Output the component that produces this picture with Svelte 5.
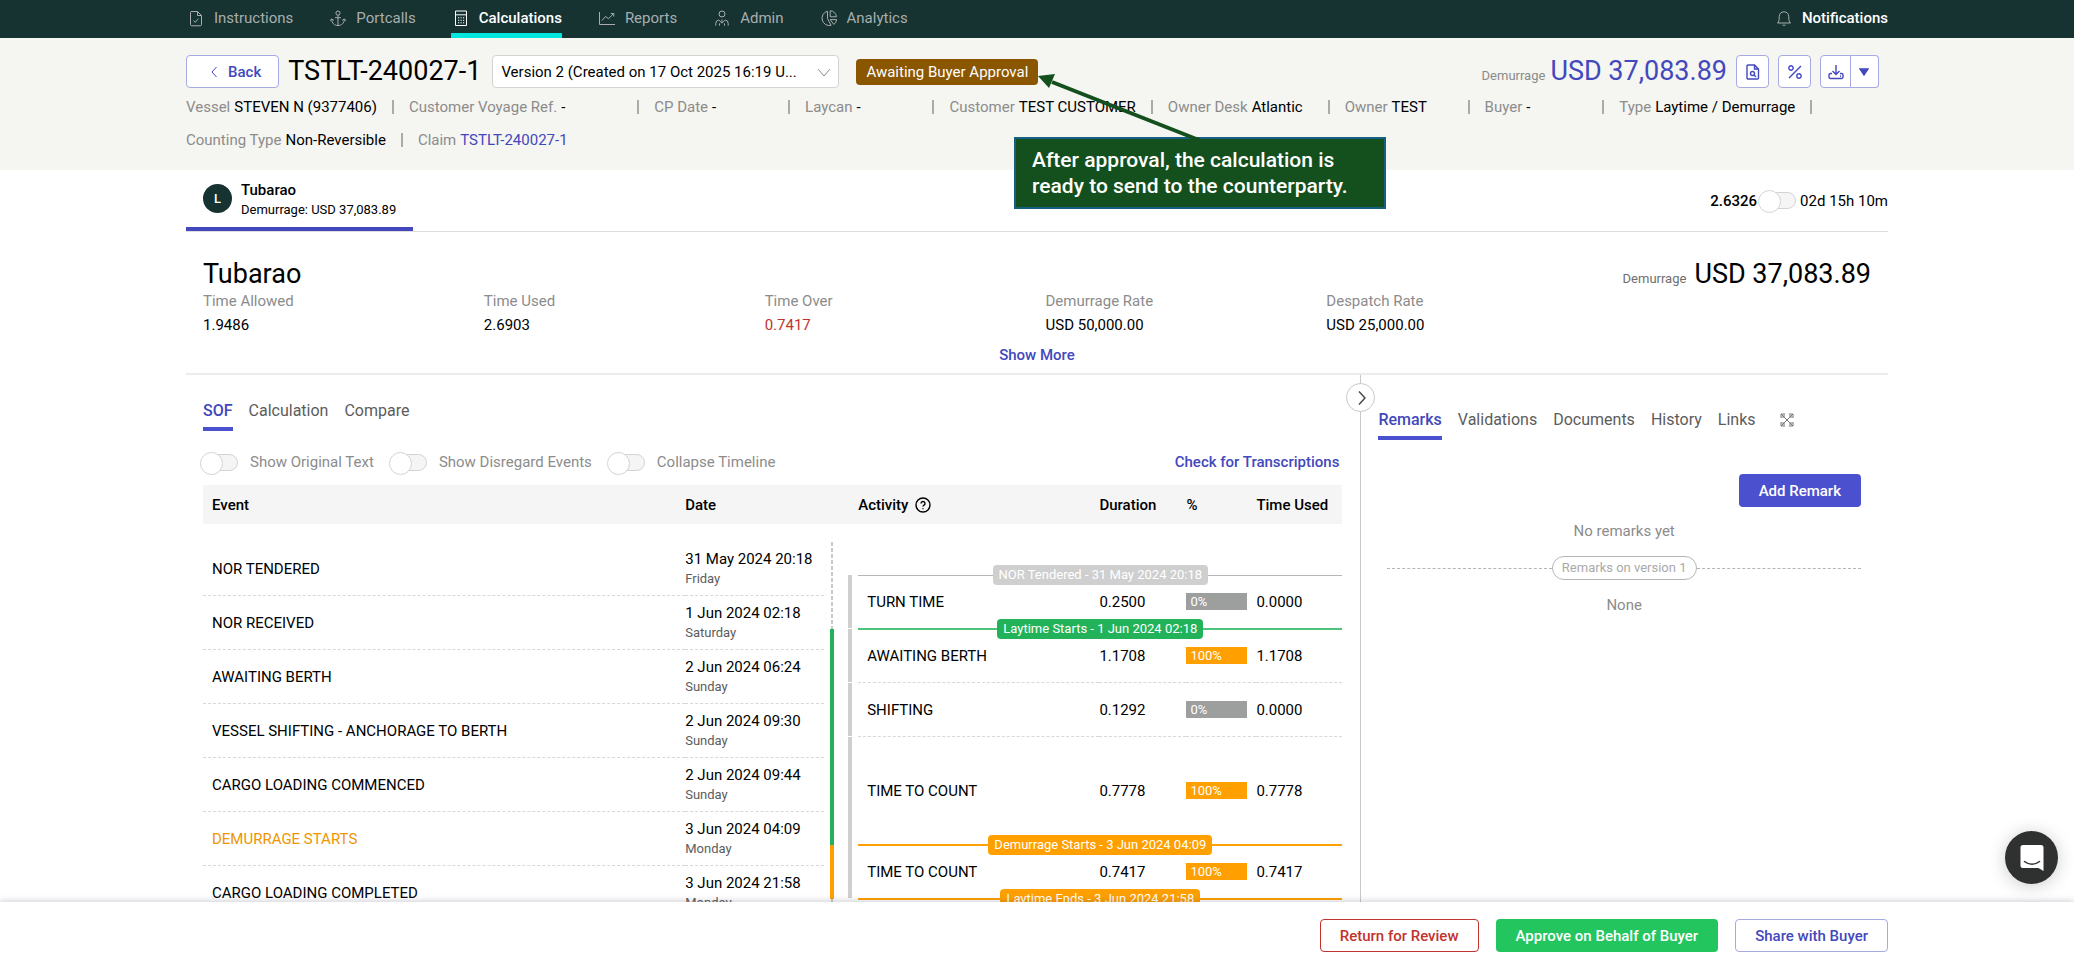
<!-- src/App.svelte -->
<script>
  // Top navigation, icons are drawn on a 20x20 grid
  const navItems = [
    { label: 'Instructions', icon: 'M5 3.5h6.5l4 4v9a1.3 1.3 0 0 1-1.3 1.3H5.8a1.3 1.3 0 0 1-1.3-1.3v-12a1 1 0 0 1 1-1zM11.5 3.5v4h4M7.6 12.6l1.6 1.7 3.2-3.6' },
    { label: 'Portcalls', icon: 'M10 7.2v10.3M10 3a2.1 2.1 0 1 0 0 4.2a2.1 2.1 0 1 0 0-4.2M7 9.7h6M2.2 12.8l1.4-1.9 2.2 1.5M3.6 11.2c.2 4 2.8 6.3 6.4 6.3s6.2-2.3 6.4-6.3M17.8 12.8l-1.4-1.9-2.2 1.5' },
    { label: 'Calculations', icon: 'M4.5 3h11v14.5h-11zM4.5 6.8h11M7 9.8h1.2M9.5 9.8h1.2M12 9.8h1.2M7 12.3h1.2M9.5 12.3h1.2M12 12.3h1.2M7 14.8h1.2M9.5 14.8h1.2M12 14.8h1.2', active: true },
    { label: 'Reports', icon: 'M2.5 4v12.5h15.5M5 12.5l3.5-4 3 2.2 5-5M13.8 5.5h3v3' },
    { label: 'Admin', icon: 'M10 3a3 3 0 1 0 0 6a3 3 0 1 0 0-6M3.8 17.6v-2.2a3.4 3.4 0 0 1 3-3.4M16.2 17.6v-2.2a3.4 3.4 0 0 0-3-3.4M6.8 12l3.2 3.2 3.2-3.2M10 11.5v3M7.5 17.6v-2.2M12.5 17.6v-2.2' },
    { label: 'Analytics', icon: 'M8.5 3.2a7.2 7.2 0 1 0 3.6 14.1L8.5 10.5zM11.2 2.8v6h6.2a6.3 6.3 0 0 0-6.2-6zM11.2 11.6h6.4a6 6 0 0 1-2.8 4.8z' }
  ];

  const details = [
    { label: 'Vessel', value: 'STEVEN N (9377406)' },
    { label: 'Customer Voyage Ref.', value: '-' },
    { label: 'CP Date', value: '-' },
    { label: 'Laycan', value: '-' },
    { label: 'Customer', value: 'TEST CUSTOMER' },
    { label: 'Owner Desk', value: 'Atlantic' },
    { label: 'Owner', value: 'TEST' },
    { label: 'Buyer', value: '-' },
    { label: 'Type', value: 'Laytime / Demurrage' },
    { label: 'Counting Type', value: 'Non-Reversible' },
    { label: 'Claim', value: 'TSTLT-240027-1', link: true }
  ];

  const summary = [
    { label: 'Time Allowed', value: '1.9486' },
    { label: 'Time Used', value: '2.6903' },
    { label: 'Time Over', value: '0.7417', over: true },
    { label: 'Demurrage Rate', value: 'USD 50,000.00' },
    { label: 'Despatch Rate', value: 'USD 25,000.00' }
  ];

  const viewTabs = ['SOF', 'Calculation', 'Compare'];
  const sideTabs = ['Remarks', 'Validations', 'Documents', 'History', 'Links'];
  const options = ['Show Original Text', 'Show Disregard Events', 'Collapse Timeline'];

  const events = [
    { name: 'NOR TENDERED', date: '31 May 2024 20:18', day: 'Friday' },
    { name: 'NOR RECEIVED', date: '1 Jun 2024 02:18', day: 'Saturday' },
    { name: 'AWAITING BERTH', date: '2 Jun 2024 06:24', day: 'Sunday' },
    { name: 'VESSEL SHIFTING - ANCHORAGE TO BERTH', date: '2 Jun 2024 09:30', day: 'Sunday' },
    { name: 'CARGO LOADING COMMENCED', date: '2 Jun 2024 09:44', day: 'Sunday' },
    { name: 'DEMURRAGE STARTS', date: '3 Jun 2024 04:09', day: 'Monday', demurrage: true },
    { name: 'CARGO LOADING COMPLETED', date: '3 Jun 2024 21:58', day: 'Monday' }
  ];

  // span = number of event rows the activity covers
  const activities = [
    { name: 'TURN TIME', duration: '0.2500', percent: 0, used: '0.0000', span: 1, flag: 'NOR Tendered - 31 May 2024 20:18', tone: 'grey' },
    { name: 'AWAITING BERTH', duration: '1.1708', percent: 100, used: '1.1708', span: 1, flag: 'Laytime Starts - 1 Jun 2024 02:18', tone: 'green' },
    { name: 'SHIFTING', duration: '0.1292', percent: 0, used: '0.0000', span: 1 },
    { name: 'TIME TO COUNT', duration: '0.7778', percent: 100, used: '0.7778', span: 2 },
    { name: 'TIME TO COUNT', duration: '0.7417', percent: 100, used: '0.7417', span: 1, flag: 'Demurrage Starts - 3 Jun 2024 04:09', tone: 'orange' }
  ];

  const rowHeight = 54;
  const phases = [
    { kind: 'before', height: 87 },
    { kind: 'laytime', height: rowHeight * 4 },
    { kind: 'demurrage', height: rowHeight },
    { kind: 'after', height: rowHeight }
  ];
  const spans = [1, 1, 1, 3];
</script>

<div class="app">
  <nav class="navbar">
    <div class="wrap nav-row">
      {#each navItems as item}
        <a href="#{item.label.toLowerCase()}" class="nav-item" class:active={item.active}>
          <svg class="nav-icon" viewBox="0 0 20 20"><path d={item.icon} /></svg>
          {item.label}
        </a>
      {/each}
      <a href="#notifications" class="nav-item notifications">
        <svg class="nav-icon" viewBox="0 0 20 20">
          <path d="M3.5 15h13c-1.4-1.2-1.7-2.5-1.7-6.2 0-3-1.9-5-4.8-5s-4.8 2-4.8 5c0 3.7-.3 5-1.7 6.2zM8.6 17.2h2.8" />
        </svg>
        Notifications
      </a>
    </div>
  </nav>

  <header class="header">
    <div class="wrap">
      <div class="title-row">
        <button class="btn outline back">
          <svg class="chevron" viewBox="0 0 10 14"><path d="M7.5 2L3 7l4.500 5" /></svg>
          Back
        </button>
        <h1>TSTLT-240027-1</h1>
        <div class="select">
          <select aria-label="Version">
            <option>Version 2 (Created on 17 Oct 2025 16:19 U...</option>
          </select>
          <svg viewBox="0 0 14 10"><path d="M1 2l6 7 6-7" /></svg>
        </div>
        <span class="status">Awaiting Buyer Approval</span>

        <div class="amount header-amount">
          <span class="amount-label">Demurrage</span>
          <span class="amount-value">USD 37,083.89</span>
        </div>
        <div class="tools">
          <button class="btn outline icon-btn" aria-label="Preview">
            <svg viewBox="0 0 18 18"><path d="M4 2h6.500l4 4v9a1 1 0 0 1-1 1H4a1 1 0 0 1-1-1V3a1 1 0 0 1 1-1zM10.500 2v4h4M8.500 8.500a2 2 0 1 0 0 4a2 2 0 1 0 0-4M10 12l2 2" /></svg>
          </button>
          <button class="btn outline icon-btn" aria-label="Rates">
            <svg viewBox="0 0 18 18"><path d="M15 3L3 15M5 2.800a2.200 2.200 0 1 0 0 4.400a2.200 2.200 0 1 0 0-4.400M13 10.800a2.200 2.200 0 1 0 0 4.400a2.200 2.200 0 1 0 0-4.400" /></svg>
          </button>
          <div class="split">
            <button class="btn outline icon-btn" aria-label="Download">
              <svg viewBox="0 0 18 18"><path d="M9 2v9M5.500 8L9 11.500 12.500 8M5 10.500H3.500a1.500 1.500 0 0 0-1.500 1.500v2a1.500 1.500 0 0 0 1.500 1.500h11a1.500 1.500 0 0 0 1.500-1.500v-2a1.500 1.500 0 0 0-1.500-1.500H13M13 13.200h1" /></svg>
            </button>
            <button class="btn outline icon-btn caret" aria-label="More downloads">
              <svg viewBox="0 0 18 18"><path class="solid" d="M5 6h8l-4 6z" /></svg>
            </button>
          </div>
        </div>
      </div>

      <div class="details">
        {#each details as item, i}
          <div class="detail">
            <span class="muted">{item.label}</span>
            {#if item.link}
              <a href="#claim">{item.value}</a>
            {:else}
              <span class="detail-value">{item.value}</span>
            {/if}
          </div>
          {#if i < details.length - 1}<span class="sep"></span>{/if}
        {/each}
      </div>
    </div>

    <!-- Help note pointing at the status badge -->
    <div class="note">
      <svg class="note-arrow" viewBox="0 0 170 70">
        <path class="shaft" d="M166 68L14 8" />
        <path class="head" d="M0 2l17-2-6 14z" />
      </svg>
      <p>After approval, the calculation is ready to send to the counterparty.</p>
    </div>
  </header>

  <main class="wrap content">
    <div class="port-tabs">
      <button class="port-tab">
        <span class="avatar">L</span>
        <span class="port-text">
          <strong>Tubarao</strong>
          <span>Demurrage: USD 37,083.89</span>
        </span>
      </button>
      <label class="unit-switch">
        <strong>2.6326</strong>
        <input type="checkbox" class="toggle" />
        <span>02d 15h 10m</span>
      </label>
    </div>

    <section class="summary">
      <div class="summary-head">
        <h2>Tubarao</h2>
        <div class="amount">
          <span class="amount-label">Demurrage</span>
          <span class="amount-value">USD 37,083.89</span>
        </div>
      </div>
      <dl class="summary-grid">
        {#each summary as item}
          <div>
            <dt class="muted">{item.label}</dt>
            <dd class:over={item.over}>{item.value}</dd>
          </div>
        {/each}
      </dl>
      <button class="link-btn show-more">Show More</button>
    </section>

    <div class="panels">
      <section class="left">
        <div class="tabs">
          {#each viewTabs as tab, i}
            <button class="tab" class:selected={i === 0}>{tab}</button>
          {/each}
        </div>

        <div class="options">
          {#each options as option}
            <label class="option muted">
              <input type="checkbox" class="toggle" />
              {option}
            </label>
          {/each}
          <button class="link-btn transcriptions">Check for Transcriptions</button>
        </div>

        <div class="sof">
          <table class="events">
            <thead>
              <tr><th>Event</th><th class="col-date">Date</th></tr>
            </thead>
            <tbody>
              {#each events as event}
                <tr>
                  <td class:demurrage-text={event.demurrage}>{event.name}</td>
                  <td>
                    <div class="date">{event.date}</div>
                    <div class="day">{event.day}</div>
                  </td>
                </tr>
              {/each}
            </tbody>
          </table>

          <div class="timeline">
            <div class="timeline-head"></div>
            <div class="tracks">
              <div class="track phases">
                {#each phases as phase}
                  <div class="phase {phase.kind}" style="height: {phase.height}px"></div>
                {/each}
              </div>
              <div class="track spans">
                {#each spans as span}
                  <div class="span" style="height: {span * rowHeight}px"></div>
                {/each}
              </div>
            </div>
          </div>

          <table class="activities">
            <thead>
              <tr>
                <th>
                  <span class="with-help">
                    Activity
                    <svg viewBox="0 0 16 16"><circle cx="8" cy="8" r="7" /><path d="M6 6.500a2 2 0 1 1 3 1.700c-.7.400-1 .7-1 1.400M8 11.200v1" /></svg>
                  </span>
                </th>
                <th class="col-duration">Duration</th>
                <th class="col-percent">%</th>
                <th class="col-used">Time Used</th>
              </tr>
            </thead>
            <tbody>
              {#each activities as activity}
                <tr style="height: {activity.span * rowHeight}px">
                  <td class="activity">
                    {activity.name}
                    {#if activity.flag}
                      <div class="flag {activity.tone}"><span>{activity.flag}</span></div>
                    {/if}
                  </td>
                  <td>{activity.duration}</td>
                  <td><span class="percent" class:full={activity.percent === 100}>{activity.percent}%</span></td>
                  <td>{activity.used}</td>
                </tr>
              {/each}
              <tr style="height: {rowHeight}px">
                <td class="activity" colspan="4">
                  <div class="flag orange"><span>Laytime Ends - 3 Jun 2024 21:58</span></div>
                </td>
              </tr>
            </tbody>
          </table>
        </div>
      </section>

      <aside class="right">
        <button class="collapse" aria-label="Collapse panel">
          <svg viewBox="0 0 10 16"><path d="M2 1.500L8 8l-6 6.500" /></svg>
        </button>
        <div class="tabs side-tabs">
          {#each sideTabs as tab, i}
            <button class="tab" class:selected={i === 0}>{tab}</button>
          {/each}
          <button class="expand" aria-label="Expand">
            <svg viewBox="0 0 14 14"><path d="M1 5V1h4M9 1h4v4M13 9v4H9M5 13H1V9M1 1l12 12M13 1L1 13M4 1.500v2.500H1.500M10 1.500v2.500h2.500M4 12.500V10H1.500M10 12.500V10h2.500" /></svg>
          </button>
        </div>
        <div class="remarks">
          <button class="btn primary">Add Remark</button>
          <p>No remarks yet</p>
          <div class="version-divider"><span>Remarks on version 1</span></div>
          <p>None</p>
        </div>
      </aside>
    </div>
  </main>

  <footer class="footer">
    <div class="wrap actions">
      <button class="btn danger">Return for Review</button>
      <button class="btn success">Approve on Behalf of Buyer</button>
      <button class="btn outline">Share with Buyer</button>
    </div>
  </footer>

  <button class="chat" aria-label="Open chat">
    <svg viewBox="0 0 24 28">
      <path class="bubble" d="M3 1h18a2.500 2.500 0 0 1 2.500 2.500V27l-5-3H3a2.500 2.500 0 0 1-2.500-2.500v-18A2.500 2.500 0 0 1 3 1z" />
      <path class="smile" d="M4.500 17.500c4.500 3.600 10.500 3.600 15 0" />
    </svg>
  </button>
</div>

<style>
  :global(body) {
    font-family: Roboto, 'Liberation Sans', sans-serif;
    font-size: 15px;
    line-height: 20px;
    color: #000;
    background: #fff;
  }

  * {
    box-sizing: border-box;
  }

  button,
  select {
    font: inherit;
    color: inherit;
    cursor: pointer;
  }

  svg {
    fill: none;
    stroke: currentColor;
    display: block;
  }

  h1,
  h2,
  p,
  dl,
  dd {
    margin: 0;
  }

  a {
    color: #4348bd;
    text-decoration: none;
  }

  strong {
    font-weight: 500;
  }

  .app {
    height: 100vh;
    display: flex;
    flex-direction: column;
    overflow: hidden;
  }

  .wrap {
    margin: 0 186px;
  }

  .muted {
    color: #8c8c8c;
  }

  /* Navigation */
  .navbar {
    background: #163332;
  }

  .nav-row {
    display: flex;
    gap: 35px;
    height: 38px;
  }

  .nav-item {
    display: flex;
    align-items: center;
    gap: 8px;
    color: #a8aead;
    padding-bottom: 2px;
    border-bottom: 0 solid #00e5dc;
  }

  .nav-icon {
    width: 20px;
    height: 20px;
  }

  .nav-item.active {
    color: #fff;
    font-weight: 500;
    padding-bottom: 0;
    padding-top: 3px;
    border-bottom-width: 5px;
  }

  .notifications {
    margin-left: auto;
    color: #fff;
    font-weight: 500;
  }

  .notifications .nav-icon {
    color: #a8aead;
  }

  /* Header */
  .header {
    position: relative;
    background: #f5f5f1;
    height: 132px;
    flex: none;
    padding-top: 17px;
  }

  .title-row {
    display: flex;
    align-items: center;
  }

  h1,
  h2,
  .amount-value {
    font-size: 27px;
    line-height: 33px;
    font-weight: 400;
  }

  h1 {
    margin: 0 11px 0 9px;
  }

  .btn {
    height: 33px;
    padding: 0 19px;
    border: 1px solid transparent;
    border-radius: 4px;
    font-weight: 500;
    white-space: nowrap;
  }

  .outline {
    background: #fff;
    border-color: #a7a9e2;
    color: #4348bd;
  }

  .primary {
    background: #4b50cf;
    color: #fff;
  }

  .danger {
    background: #fff;
    border-color: #c2322e;
    color: #c2322e;
  }

  .success {
    background: #22c55e;
    color: #fff;
  }

  .back {
    display: flex;
    align-items: center;
    gap: 9px;
    padding: 0 17px 0 22px;
  }

  .chevron {
    width: 10px;
    height: 14px;
  }

  .select {
    position: relative;
    width: 347px;
  }

  .select select {
    width: 100%;
    height: 33px;
    padding: 0 30px 0 8px;
    appearance: none;
    background: #fff;
    border: 1px solid #d3d3d3;
    border-radius: 4px;
    text-overflow: ellipsis;
  }

  .select svg {
    position: absolute;
    right: 8px;
    top: 12px;
    width: 14px;
    height: 10px;
    color: #8c8c8c;
    pointer-events: none;
  }

  .status {
    margin-left: 17px;
    padding: 3px 10px;
    border-radius: 4px;
    background: #8a5600;
    color: #fff;
    white-space: nowrap;
  }

  .amount {
    display: flex;
    align-items: baseline;
    gap: 8px;
    white-space: nowrap;
  }

  .amount-label {
    font-size: 13px;
    color: #6e6e6e;
  }

  .header-amount {
    gap: 5px;
    margin-left: auto;
  }

  .header-amount .amount-label {
    color: #8c8c8c;
  }

  .header-amount .amount-value {
    color: #4348bd;
  }

  .tools {
    display: flex;
    gap: 9px;
    margin: 0 9px;
  }

  .split {
    display: flex;
  }

  .icon-btn {
    width: 33px;
    padding: 0 7px;
  }

  .icon-btn svg {
    width: 18px;
    height: 18px;
    stroke-width: 1.4;
  }

  .solid {
    fill: currentColor;
  }

  .split .icon-btn:first-child {
    border-radius: 4px 0 0 4px;
    width: 31px;
    padding: 0 6px;
  }

  .split .caret {
    width: 28px;
    padding: 0 4px;
    border-left: 0;
    border-radius: 0 4px 4px 0;
  }

  .details {
    display: flex;
    flex-wrap: wrap;
    align-items: center;
    column-gap: 15px;
    row-gap: 13px;
    padding-top: 9px;
  }

  .detail {
    display: flex;
    gap: 4px;
    white-space: nowrap;
  }

  .detail-value {
    min-width: 61px;
  }

  .sep {
    width: 2px;
    height: 14px;
    background: #aaa;
  }

  .note {
    position: absolute;
    left: 1014px;
    top: 99px;
    width: 372px;
    padding: 8px 16px;
    background: #14501e;
    border: 2px solid #156082;
    color: #fff;
    font-size: 21px;
    line-height: 26px;
    font-weight: 500;
    z-index: 2;
  }

  .note-arrow {
    position: absolute;
    left: 22px;
    top: -65px;
    width: 170px;
    height: 70px;
    color: #14501e;
  }

  .shaft {
    stroke-width: 4;
  }

  .head {
    fill: currentColor;
    stroke: none;
  }

  /* Port tabs */
  .content {
    flex: 1;
    min-height: 0;
    display: flex;
    flex-direction: column;
  }

  .port-tabs {
    display: flex;
    justify-content: space-between;
    align-items: stretch;
    height: 62px;
    flex: none;
    border-bottom: 1px solid #dedede;
  }

  .port-tab {
    display: flex;
    gap: 9px;
    padding: 10px 17px 0;
    border: 0;
    border-bottom: 4px solid #4348bd;
    background: none;
    text-align: left;
  }

  .avatar {
    width: 29px;
    height: 29px;
    margin-top: 4px;
    border-radius: 50%;
    background: #163332;
    color: #fff;
    font-size: 13px;
    font-weight: 500;
    line-height: 29px;
    text-align: center;
  }

  .port-text {
    display: flex;
    flex-direction: column;
    font-size: 13px;
  }

  .port-text strong {
    font-size: 15px;
  }

  .unit-switch {
    display: flex;
    align-items: center;
    gap: 4px;
  }

  .toggle {
    appearance: none;
    flex: none;
    width: 35px;
    height: 17px;
    margin: 0;
    border: 1px solid #d3d3d3;
    border-radius: 9px;
    background: #f5f5f5;
  }

  .toggle::before {
    content: '';
    display: block;
    width: 21px;
    height: 21px;
    margin: -3px 0 0 -4px;
    border: 1px solid #d3d3d3;
    border-radius: 50%;
    background: #fff;
  }

  /* Summary */
  .summary {
    flex: none;
    height: 143px;
    padding: 26px 17px 0;
    border-bottom: 2px solid #ececec;
    display: flex;
    flex-direction: column;
  }

  .summary-head {
    display: flex;
    justify-content: space-between;
  }

  .summary-grid {
    display: grid;
    grid-template-columns: repeat(6, 1fr);
    column-gap: 17px;
  }

  dd {
    margin-top: 4px;
  }

  .over {
    color: #c2322e;
  }

  .link-btn {
    border: 0;
    padding: 0;
    background: none;
    color: #4348bd;
    font-weight: 500;
  }

  .show-more {
    align-self: center;
    margin-top: 10px;
  }

  /* Panels */
  .panels {
    flex: 1;
    min-height: 0;
    display: grid;
    grid-template-columns: 69% 31%;
  }

  .left {
    padding: 26px 18px 0 17px;
    min-width: 0;
  }

  .tabs {
    display: flex;
    gap: 16px;
  }

  .tab {
    padding: 0 0 6px;
    border: 0;
    border-bottom: 4px solid transparent;
    background: none;
    color: #5c5c5c;
    font-size: 16px;
  }

  .tab.selected {
    color: #4348bd;
    border-color: #4b50cf;
    font-weight: 500;
  }

  .options {
    display: flex;
    align-items: center;
    gap: 18px;
    padding: 21px 3px 13px 0;
  }

  .option {
    display: flex;
    align-items: center;
    gap: 12px;
  }

  .transcriptions {
    margin-left: auto;
  }

  .sof {
    display: grid;
    grid-template-columns: 621fr 34px 484fr;
    align-items: start;
  }

  table {
    width: 100%;
    border-collapse: separate;
    border-spacing: 0;
    table-layout: fixed;
  }

  th {
    height: 39px;
    padding: 0;
    background: #f5f5f5;
    font-weight: 500;
    text-align: left;
  }

  .events th:first-child,
  .events td:first-child {
    padding-left: 9px;
  }

  .col-date {
    width: 139px;
  }

  tbody::before {
    content: '';
    display: block;
    height: 18px;
  }

  .activities tbody::before {
    height: 51px;
  }

  td {
    padding: 0;
    border-bottom: 1px dashed #d8d8d8;
  }

  .events td {
    height: 54px;
  }

  .day {
    font-size: 13px;
    line-height: 20px;
    color: #5c5c5c;
  }

  .demurrage-text {
    color: #ee9500;
  }

  .timeline-head {
    height: 39px;
    background: #f5f5f5;
  }

  .tracks {
    display: flex;
    gap: 14px;
    padding: 18px 0 0 6px;
  }

  .track {
    width: 4px;
  }

  .spans {
    padding-top: 33px;
  }

  .before {
    width: 2px;
    margin-left: 1px;
    background: repeating-linear-gradient(#c8c8c8 0 4px, #fff 4px 6px);
  }

  .laytime {
    background: #22b35a;
  }

  .demurrage {
    background: #ffa000;
  }

  .after {
    width: 2px;
    margin-left: 1px;
    background: #c8c8c8;
  }

  .span {
    background: #cfcfcf;
    border-bottom: 1px solid #fff;
  }

  .with-help {
    display: flex;
    align-items: center;
    gap: 7px;
  }

  .with-help svg {
    width: 16px;
    height: 16px;
    stroke-width: 1.4;
  }

  .col-duration {
    width: 87px;
  }

  .col-percent {
    width: 70px;
  }

  .col-used {
    width: 86px;
  }

  .activities tr {
    position: relative;
  }

  .activity {
    padding-left: 9px;
  }

  .percent {
    display: block;
    width: 61px;
    padding-left: 4px;
    background: #9d9e9e;
    color: #fff;
    font-size: 13px;
    line-height: 17px;
  }

  .percent.full {
    background: #ffa000;
  }

  .flag {
    --tone: #cfcfcf;
    --line: #b5b5b5;
    position: absolute;
    left: 0;
    right: 0;
    top: -10px;
    display: flex;
    align-items: center;
    font-size: 13px;
    line-height: 20px;
    color: #fff;
    white-space: nowrap;
  }

  .flag::before,
  .flag::after {
    content: '';
    flex: 1;
    height: 1px;
    background: var(--line);
  }

  .flag span {
    padding: 0 6px;
    border-radius: 4px;
    background: var(--tone);
  }

  .flag.green {
    --tone: #22b35a;
    --line: #4cc27b;
  }

  .flag.orange {
    --tone: #ffa000;
    --line: #ffa000;
  }

  .flag.green::before,
  .flag.green::after,
  .flag.orange::before,
  .flag.orange::after {
    height: 2px;
  }

  /* Side panel */
  .right {
    position: relative;
    border-left: 1px solid #c9c9c9;
    padding: 35px 27px 0 17px;
  }

  .collapse {
    position: absolute;
    left: -15px;
    top: 8px;
    width: 29px;
    height: 29px;
    padding: 0 0 0 10px;
    border: 1px solid #c9c9c9;
    border-radius: 50%;
    background: #fff;
  }

  .collapse svg {
    width: 10px;
    height: 16px;
    stroke-width: 1.4;
    color: #444;
  }

  .expand {
    margin-left: 8px;
    padding: 0 0 10px;
    border: 0;
    background: none;
    color: #777;
  }

  .expand svg {
    width: 14px;
    height: 14px;
  }

  .remarks {
    display: flex;
    flex-direction: column;
    padding: 34px 0 0 9px;
    text-align: center;
    color: #8c8c8c;
  }

  .remarks .btn {
    align-self: flex-end;
    margin-bottom: 14px;
  }

  .version-divider {
    display: flex;
    align-items: center;
    margin: 15px 0;
    font-size: 13px;
    line-height: 22px;
    color: #aaa;
  }

  .version-divider::before,
  .version-divider::after {
    content: '';
    flex: 1;
    border-top: 1px dashed #b5b5b5;
  }

  .version-divider span {
    padding: 0 9px;
    border: 1px solid #b5b5b5;
    border-radius: 12px;
  }

  /* Footer */
  .footer {
    position: relative;
    flex: none;
    padding: 17px 0 14px;
    background: #fff;
    box-shadow: 0 -1px 6px rgba(60, 60, 90, 0.25);
  }

  .actions {
    display: flex;
    justify-content: flex-end;
    gap: 17px;
  }

  .chat {
    position: fixed;
    right: 16px;
    bottom: 82px;
    width: 53px;
    height: 53px;
    padding: 0 0 0 15px;
    border: 0;
    border-radius: 50%;
    background: #2f3130;
    box-shadow: 0 2px 18px rgba(0, 0, 0, 0.2);
  }

  .chat svg {
    width: 24px;
    height: 28px;
    stroke: none;
  }

  .chat .bubble {
    fill: #fff;
  }

  .chat .smile {
    stroke: #2f3130;
    stroke-width: 1.6;
    stroke-linecap: round;
  }
</style>
